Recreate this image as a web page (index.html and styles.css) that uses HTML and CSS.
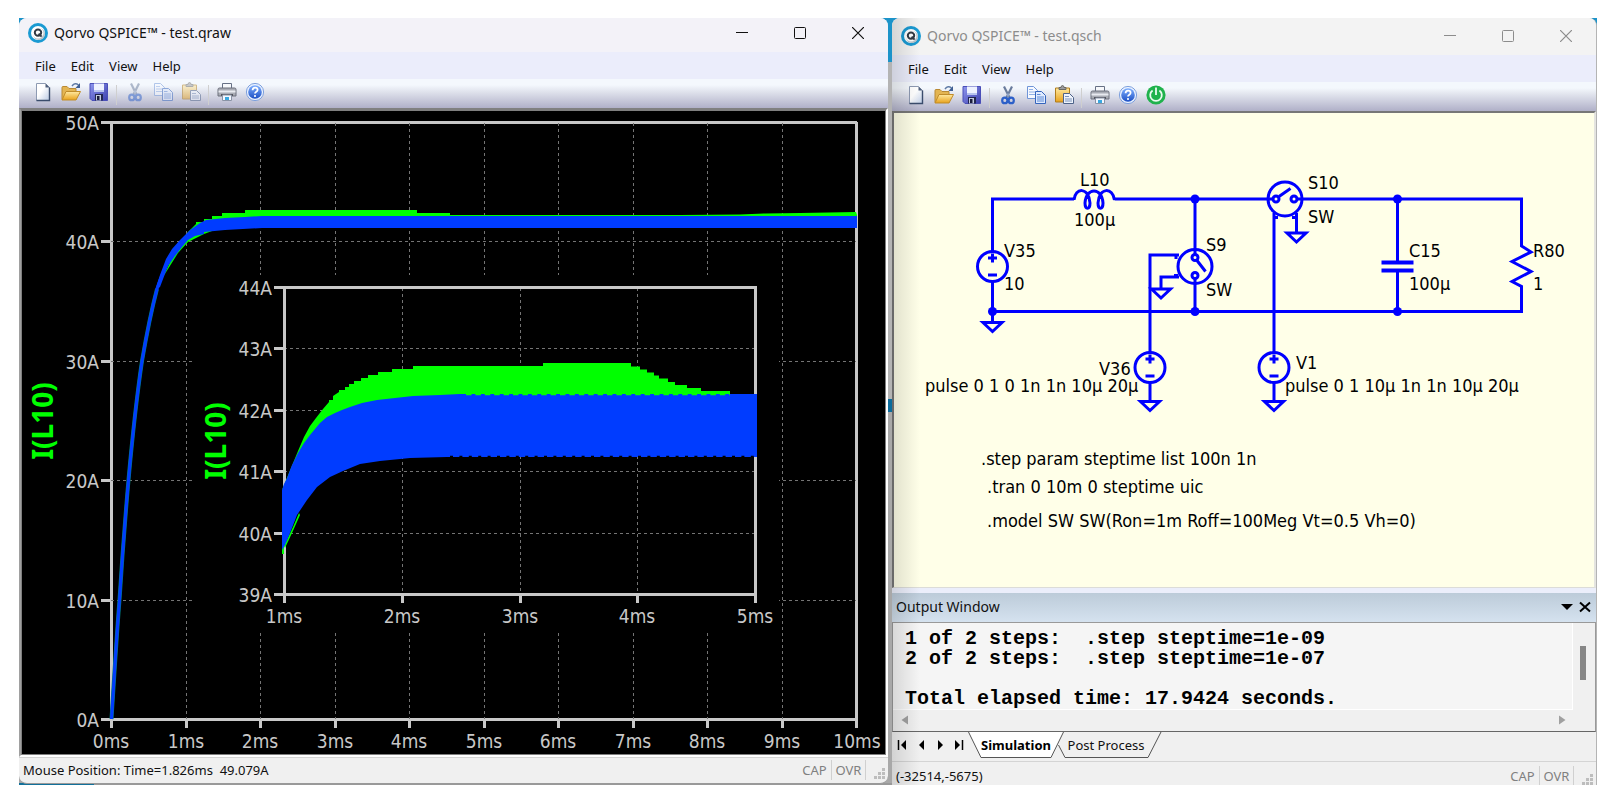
FILE: index.html
```html
<!DOCTYPE html>
<html lang="en">
<head>
<meta charset="utf-8">
<title>Qorvo QSPICE</title>
<link rel="stylesheet" href="styles.css">
</head>
<body>
<svg class="defs" aria-hidden="true">
  <defs>
    <linearGradient id="g-gold" x1="0" y1="0" x2="0" y2="1"><stop offset="0" stop-color="#ffe9a0"/><stop offset="1" stop-color="#e8a21c"/></linearGradient>
    <linearGradient id="g-blue" x1="0" y1="0" x2="0" y2="1"><stop offset="0" stop-color="#7fb0ff"/><stop offset="1" stop-color="#1c4fc4"/></linearGradient>
    <linearGradient id="g-page" x1="0" y1="0" x2="1" y2="1"><stop offset="0.4" stop-color="#ffffff"/><stop offset="1" stop-color="#b9c8e2"/></linearGradient>
    <linearGradient id="g-disk" x1="0" y1="0" x2="1" y2="1"><stop offset="0" stop-color="#8f97ee"/><stop offset="1" stop-color="#3b3fae"/></linearGradient>
    <symbol id="i-logo" viewBox="0 0 20 20">
      <circle cx="10" cy="10" r="10" fill="#1a9ad2"/>
      <circle cx="10" cy="10" r="7" fill="#fff"/>
      <circle cx="11" cy="11" r="6" fill="#b9c2c8"/>
      <circle cx="10" cy="10" r="5.500" fill="#fff"/>
      <circle cx="10" cy="9.600" r="3.200" fill="none" stroke="#333b45" stroke-width="2"/>
      <path d="M10.600 10.600l3 3" stroke="#333b45" stroke-width="2"/>
    </symbol>
    <symbol id="i-new" viewBox="0 0 20 20">
      <path d="M3.500 1.500h9l4 4v13h-13z" fill="url(#g-page)" stroke="#8d9ab2"/>
      <path d="M16.500 5.500v13h-13" fill="none" stroke="#3a4c6c" stroke-width="1.400"/>
      <path d="M12.500 1.500v4h4z" fill="#51617d"/>
    </symbol>
    <symbol id="i-open" viewBox="0 0 20 20">
      <path d="M1 17.500V5.500q0-1 1-1h4l2 2h7v11z" fill="#e3b552" stroke="#b98a35"/>
      <path d="M1 18L5 9.500h14.500L15 18z" fill="url(#g-gold)" stroke="#c08c2a"/>
      <path d="M11 4q3-4 6.500-1" fill="none" stroke="#5f7ba6" stroke-width="1.500"/>
      <path d="M19 1v5h-4.500z" fill="#3f5f93"/>
    </symbol>
    <symbol id="i-save" viewBox="0 0 20 20">
      <path d="M1 1.500h17.500v17H3l-2-2z" fill="url(#g-disk)" stroke="#4a4fb8"/>
      <path d="M5 1.500h10v8H5z" fill="#eef2ff"/>
      <path d="M5 8h10v2H5z" fill="#b8c4ee"/>
      <path d="M6 12h8v6.500H6z" fill="#22264f"/>
      <path d="M7 13h5v5.500H7z" fill="#c4ccdd"/>
      <path d="M8 14h2.500v4H8z" fill="#1b1d3c"/>
    </symbol>
    <symbol id="i-cut" viewBox="0 0 20 20">
      <path d="M6 1.500l5.500 11M14 1.500L8.500 12.500" stroke="#6a7c9c" stroke-width="2.200" fill="none"/>
      <path d="M10 8.500v3" stroke="#8fa4c8" stroke-width="2"/>
      <ellipse cx="6.800" cy="15.400" rx="2.600" ry="2.800" fill="none" stroke="#2c5fc8" stroke-width="2.200"/>
      <ellipse cx="13.200" cy="15.400" rx="2.600" ry="2.800" fill="none" stroke="#2c5fc8" stroke-width="2.200"/>
    </symbol>
    <symbol id="i-copy" viewBox="0 0 20 20">
      <path d="M1.500 1.500h6l4 4v8h-10z" fill="#f6f9ff" stroke="#6f95d8"/>
      <path d="M3 4.500h4M3 7h6M3 9.500h6" stroke="#8fb0e6"/>
      <path d="M9.500 6.500h6l4 4v8h-10z" fill="#e0ebff" stroke="#3565bd"/>
      <path d="M11 9.500h3.500M11 12h7M11 14h7M11 16h7" stroke="#5d8ad6"/>
    </symbol>
    <symbol id="i-paste" viewBox="0 0 20 20">
      <path d="M1.500 3h14v14h-14z" fill="url(#g-gold)" stroke="#b07d1d"/>
      <path d="M5 4.500V2.500h2q0-2 1.500-2T10 2.500h2v2z" fill="#9a9ba0" stroke="#6b6a62"/>
      <path d="M9.500 8.500h6l4 4v6h-10z" fill="#eef3fc" stroke="#4d6288"/>
      <path d="M11 11.500h4M11 14h7M11 16h7" stroke="#7d93ba"/>
    </symbol>
    <symbol id="i-print" viewBox="0 0 20 20">
      <path d="M5.500 7V1.500h9V7z" fill="#f6f8fb" stroke="#667085"/>
      <path d="M1 7.500q0-1.500 1.500-1.500h15q1.500 0 1.500 1.500V14H1z" fill="#a9acb5" stroke="#6c707c"/>
      <path d="M1.500 9.500h17" stroke="#e8eaf0" stroke-width="2"/>
      <path d="M4 12h12v2H4z" fill="#54575f"/>
      <path d="M5.500 13h9v5.500h-9z" fill="#f4f8ff" stroke="#8a93a5"/>
      <path d="M8 15h4v3H8z" fill="#39a8e0"/>
    </symbol>
    <symbol id="i-help" viewBox="0 0 20 20">
      <circle cx="10" cy="10" r="8.600" fill="#e9f1ff" stroke="#7ea0dc"/>
      <circle cx="10" cy="10" r="6.800" fill="url(#g-blue)"/>
      <path d="M7.600 8.200q0-2.600 2.500-2.600t2.500 2.200q0 1.200-1.300 2t-1.300 1.800" fill="none" stroke="#fff" stroke-width="1.800"/>
      <circle cx="10" cy="14" r="1.100" fill="#fff"/>
    </symbol>
    <symbol id="i-power" viewBox="0 0 20 20">
      <circle cx="10" cy="10" r="9.600" fill="#1fb24c"/>
      <path d="M6.600 5.400a5.800 5.800 0 1 0 6.800 0" fill="none" stroke="#e9fbef" stroke-width="1.800"/>
      <path d="M10 2.500v7.500" stroke="#e9fbef" stroke-width="1.800"/>
    </symbol>
    <symbol id="i-min" viewBox="0 0 12 12"><path d="M0 5.500h12" stroke="currentColor"/></symbol>
    <symbol id="i-max" viewBox="0 0 12 12"><rect x="0.500" y="0.500" width="11" height="11" rx="1" fill="none" stroke="currentColor"/></symbol>
    <symbol id="i-close" viewBox="0 0 12 12"><path d="M0 0l12 12M12 0L0 12" stroke="currentColor" stroke-width="1.200"/></symbol>
    <symbol id="i-grip" viewBox="0 0 12 12"><path d="M8 0h3v3H8zM4 4h3v3H4zM8 4h3v3H8zM0 8h3v3H0zM4 8h3v3H4zM8 8h3v3H8z" fill="#bdbdbd"/></symbol>
    <g id="gnd"><path d="M-9.500 0h19L0 9z"/></g>
    <g id="source"><circle r="15"/><path d="M-4.500-8.500h9M0-13v9M-4.500 8.500h9"/></g>
  </defs>
</svg>

<main class="desktop">
  <section class="window window-plot">
    <header class="titlebar">
      <svg class="logo"><use href="#i-logo"/></svg>
      <h1 class="title">Qorvo QSPICE™ - test.qraw</h1>
      <button class="caption" aria-label="Minimize"><svg><use href="#i-min"/></svg></button>
      <button class="caption" aria-label="Maximize"><svg><use href="#i-max"/></svg></button>
      <button class="caption" aria-label="Close"><svg><use href="#i-close"/></svg></button>
    </header>
    <nav class="menubar"><button>File</button><button>Edit</button><button>View</button><button>Help</button></nav>
    <div class="toolbar">
      <button aria-label="New"><svg><use href="#i-new"/></svg></button>
      <button aria-label="Open"><svg><use href="#i-open"/></svg></button>
      <button aria-label="Save"><svg><use href="#i-save"/></svg></button>
      <span class="separator"></span>
      <button aria-label="Cut" disabled><svg><use href="#i-cut"/></svg></button>
      <button aria-label="Copy" disabled><svg><use href="#i-copy"/></svg></button>
      <button aria-label="Paste" disabled><svg><use href="#i-paste"/></svg></button>
      <span class="separator"></span>
      <button aria-label="Print"><svg><use href="#i-print"/></svg></button>
      <button aria-label="Help"><svg><use href="#i-help"/></svg></button>
    </div>
    <div class="plot-frame">
      <svg class="plot" viewBox="21 110 865 645" role="img" aria-label="Inductor current I(L10) against time">
        <rect x="21" y="110" width="865" height="645" fill="#000"/>
        <rect class="focus" x="21.500" y="110.500" width="864" height="644"/>
        <path class="axis" d="M101 122.500H857M111.500 122.500V728M101 719.500H856M856.500 122V728M101 241.500h10M101 361.500h10M101 480.500h10M101 600.500h10M186.500 720v8M260.500 720v8M335.500 720v8M409.500 720v8M484.500 720v8M558.500 720v8M633.500 720v8M707.500 720v8M782.500 720v8"/>
        <path class="grid" d="M186.500 123V719M260.500 123V719M335.500 123V719M409.500 123V719M484.500 123V719M558.500 123V719M633.500 123V719M707.500 123V719M782.500 123V719M111 241.500H856M111 361.500H856M111 480.500H856M111 600.500H856"/>
        <path fill="#0f0" d="M176 250L188 232 196 224V222H204V219H212V216H222V213H245V210H417V213H450V215L680 215 740 214.500 765 213.500 800 213 856 212 857 215V228H220L204 234 188 242 178 253 168 269 163 277z"/>
        <path class="rise-edge" d="M111.500 719C114 680 117 630 119.500 600 122 560 125 520 128.500 480 133 430 138 388 142 361 147 332 152 308 157 289"/>
        <path class="rise" d="M111.500 719C114 680 117 630 119.500 600 122 560 125 520 128.500 480 133 430 138 388 142 361 147 332 152 308 157 289 162 273 168 261 174 251"/>
        <path fill="#003cff" d="M155 290L160 275 166 259 172 249 180 240 190 230 200 223 206 220 225 218 245 217 262 216H857V228H262L225 230 204 232V234L195 236 188 240 182 247 175 256 168 266 160 287z"/>
        <g class="labels labels-y">
          <text x="99" y="130">50A</text><text x="99" y="249">40A</text><text x="99" y="369">30A</text><text x="99" y="488">20A</text><text x="99" y="608">10A</text><text x="99" y="727">0A</text>
        </g>
        <g class="labels labels-x">
          <text x="111" y="748">0ms</text><text x="186" y="748">1ms</text><text x="260" y="748">2ms</text><text x="335" y="748">3ms</text><text x="409" y="748">4ms</text><text x="484" y="748">5ms</text><text x="558" y="748">6ms</text><text x="633" y="748">7ms</text><text x="707" y="748">8ms</text><text x="782" y="748">9ms</text><text x="857" y="748">10ms</text>
        </g>
        <text class="trace" transform="translate(53 421) rotate(-90)">I(L10)</text>

        <rect x="193" y="275" width="586" height="358" fill="#000"/>
        <path class="grid" d="M183 361.500h10M183 480.500h10M183 600.500h10M402.500 288V594M520.500 288V594M637.500 288V594M284 348.500H755M284 410.500H755M284 471.500H755M284 533.500H755"/>
        <path class="axis" d="M274 287.500H757M284.500 287.500V603M274 594.500H755M755.500 287V603M274 348.500h10M274 410.500h10M274 471.500h10M274 533.500h10M402.500 595v8M520.500 595v8M637.500 595v8"/>
        <path fill="#0f0" d="M282 490L298 451 304 437 310 426 316 418 323 409 329 402V400H333V396L339 392V390H345V387H349V384H354V381H361V378H368V375H378V372H392V369H413V366H543V363H631V366.500H640V369.500H647V372.500H654V375.500H659V378.500H668V382H675V385H687V388H701V391H730V394H756V397L400 420 310 460z"/>
        <path fill="#0f0" d="M282 545h2V554h-2zM284 546L293 527 299 513 300 515 292 533 285 548z"/>
        <path fill="#003cff" d="M282 490L284 484 287 478 292 465 298 453 304 443 310 435 320 423 327 417 335 413 342 410 350 407 362 403 377 400 395 398 413 396 440 395 460 394H757V457H447L410 458 380 461 360 464 343 471 330 477 317 487 307 500 297 515 290 533 285 545 282 550z"/>
        <path d="M466 394.500H730" fill="none" stroke="#0f0" stroke-width="1.500" stroke-dasharray="5.500 3.900"/>
        <path d="M450 456.500H756" fill="none" stroke="#000" stroke-width="1.500" stroke-dasharray="3 6.400"/>
        <g class="labels labels-y">
          <text x="272" y="295">44A</text><text x="272" y="356">43A</text><text x="272" y="418">42A</text><text x="272" y="479">41A</text><text x="272" y="541">40A</text><text x="272" y="602">39A</text>
        </g>
        <g class="labels labels-x">
          <text x="284" y="623">1ms</text><text x="402" y="623">2ms</text><text x="520" y="623">3ms</text><text x="637" y="623">4ms</text><text x="755" y="623">5ms</text>
        </g>
        <text class="trace" transform="translate(226 441) rotate(-90)">I(L10)</text>
      </svg>
    </div>
    <footer class="statusbar">
      <span class="status-text">Mouse Position: Time=1.826ms&nbsp; 49.079A</span>
      <span class="status-key">CAP</span><span class="status-key">OVR</span>
      <svg class="grip"><use href="#i-grip"/></svg>
    </footer>
  </section>

  <section class="window window-schematic">
    <header class="titlebar">
      <svg class="logo"><use href="#i-logo"/></svg>
      <h1 class="title">Qorvo QSPICE™ - test.qsch</h1>
      <button class="caption" aria-label="Minimize"><svg><use href="#i-min"/></svg></button>
      <button class="caption" aria-label="Maximize"><svg><use href="#i-max"/></svg></button>
      <button class="caption" aria-label="Close"><svg><use href="#i-close"/></svg></button>
    </header>
    <nav class="menubar"><button>File</button><button>Edit</button><button>View</button><button>Help</button></nav>
    <div class="toolbar">
      <button aria-label="New"><svg><use href="#i-new"/></svg></button>
      <button aria-label="Open"><svg><use href="#i-open"/></svg></button>
      <button aria-label="Save"><svg><use href="#i-save"/></svg></button>
      <span class="separator"></span>
      <button aria-label="Cut"><svg><use href="#i-cut"/></svg></button>
      <button aria-label="Copy"><svg><use href="#i-copy"/></svg></button>
      <button aria-label="Paste"><svg><use href="#i-paste"/></svg></button>
      <span class="separator"></span>
      <button aria-label="Print"><svg><use href="#i-print"/></svg></button>
      <button aria-label="Help"><svg><use href="#i-help"/></svg></button>
      <button aria-label="Run"><svg><use href="#i-power"/></svg></button>
    </div>
    <div class="sheet-frame">
      <svg class="sheet" viewBox="894 113 700 474" role="img" aria-label="Boost converter schematic">
        <g class="wires">
          <path d="M992.500 251V199H1074M1114.500 199H1273M1297 199H1521.500V246L1531 252 1512 261.500 1531 271.500 1512 281.500 1521.500 286.500V311.500H992.500M992.500 282V322M1195 199V255M1195 279V311.500M1397.500 199V262M1397.500 271V311.500"/>
          <path d="M1074 200C1075 187 1089 187 1090 203C1090 210 1085 210 1085 203C1086 187 1102 187 1103 203C1103 210 1098 210 1098 203C1099 187 1113 187 1114.500 200"/>
          <path d="M1179 255H1150V352M1150 383V401M1179 277H1161V289M1274 213V352M1274 383V401M1296.500 213V233"/>
          <path d="M1381.500 262.500h32M1381.500 270.500h32" stroke-width="4"/>
          <circle cx="1195" cy="266.500" r="17"/><circle cx="1195" cy="257.500" r="3"/><circle cx="1195" cy="275.500" r="3"/>
          <path d="M1197 260.500L1205.500 271.500M1176 255v4M1174 275.500h4"/>
          <circle cx="1285" cy="199" r="17"/><circle cx="1276" cy="199" r="3"/><circle cx="1294" cy="199" r="3"/>
          <path d="M1279 196.500L1290.500 188.500M1274 217.500h4M1292 217.500h4"/>
          <use href="#source" x="992.500" y="266.500"/><use href="#source" x="1150" y="367.500"/><use href="#source" x="1274" y="367.500"/>
          <use href="#gnd" x="992.500" y="322.500"/><use href="#gnd" x="1161" y="289"/><use href="#gnd" x="1296.500" y="233"/><use href="#gnd" x="1150" y="401.500"/><use href="#gnd" x="1274" y="401.500"/>
        </g>
        <g fill="#00f"><circle cx="992.500" cy="311.500" r="4.500"/><circle cx="1195" cy="199" r="4.500"/><circle cx="1195" cy="311.500" r="4.500"/><circle cx="1397.500" cy="199" r="4.500"/><circle cx="1397.500" cy="311.500" r="4.500"/></g>
        <g class="notes">
          <text x="1080" y="186">L10</text><text x="1074" y="226">100µ</text>
          <text x="1004" y="257">V35</text><text x="1004" y="290">10</text>
          <text x="1206" y="251">S9</text><text x="1206" y="296">SW</text>
          <text x="1308" y="189">S10</text><text x="1308" y="223">SW</text>
          <text x="1409" y="257">C15</text><text x="1409" y="290">100µ</text>
          <text x="1533" y="257">R80</text><text x="1533" y="290">1</text>
          <text x="1099" y="375">V36</text><text x="1296" y="369">V1</text>
          <text x="925" y="392">pulse 0 1 0 1n 1n 10µ 20µ</text>
          <text x="1285" y="392">pulse 0 1 10µ 1n 1n 10µ 20µ</text>
          <text x="981" y="465">.step param steptime list 100n 1n</text>
          <text x="987" y="493">.tran 0 10m 0 steptime uic</text>
          <text x="987" y="527">.model SW SW(Ron=1m Roff=100Meg Vt=0.5 Vh=0)</text>
        </g>
      </svg>
    </div>
    <section class="output">
      <header class="output-head">
        <h2>Output Window</h2>
        <button aria-label="Window position"><svg viewBox="0 0 12 12"><path d="M0 3h12L6 9z" fill="#000"/></svg></button>
        <button aria-label="Close panel"><svg viewBox="0 0 12 12"><path d="M1 1.500l10 9M11 1.500l-10 9" stroke="#000" stroke-width="2"/></svg></button>
      </header>
      <div class="output-body">
        <pre class="log">1 of 2 steps:  .step steptime=1e-09
2 of 2 steps:  .step steptime=1e-07

Total elapsed time: 17.9424 seconds.</pre>
        <div class="scroll-y"><span class="thumb"></span></div>
        <div class="scroll-x">
          <svg viewBox="0 0 8 10"><path d="M7 0.500v9L0.500 5z"/></svg>
          <svg viewBox="0 0 8 10"><path d="M1 0.500v9L7.500 5z"/></svg>
        </div>
      </div>
      <div class="tabs">
        <button class="step" aria-label="First"><svg viewBox="0 0 10 10"><path d="M1.500 0v10" stroke="#000" stroke-width="1.500"/><path d="M9 0v10L4 5z"/></svg></button>
        <button class="step" aria-label="Previous"><svg viewBox="0 0 10 10"><path d="M8 0v10L3 5z"/></svg></button>
        <button class="step" aria-label="Next"><svg viewBox="0 0 10 10"><path d="M3 0v10l5-5z"/></svg></button>
        <button class="step" aria-label="Last"><svg viewBox="0 0 10 10"><path d="M8.500 0v10" stroke="#000" stroke-width="1.500"/><path d="M1 0v10l5-5z"/></svg></button>
        <button class="tab tab-active"><svg viewBox="0 0 96 26" preserveAspectRatio="none"><path d="M0.500 0L13 25.500H83L95.500 0z" fill="#fff"/><path d="M0.500 0L13 25.500H83L95.500 0" fill="none" stroke="#555"/></svg><span>Simulation</span></button>
        <button class="tab"><svg viewBox="0 0 104 26" preserveAspectRatio="none"><path d="M0.500 13L7 25.500H90L103 0" fill="none" stroke="#555"/></svg><span>Post Process</span></button>
      </div>
    </section>
    <footer class="statusbar">
      <span class="status-text">(-32514,-5675)</span>
      <span class="status-key">CAP</span><span class="status-key">OVR</span>
      <svg class="grip"><use href="#i-grip"/></svg>
    </footer>
  </section>
</main>
</body>
</html>
```
FILE: styles.css
```css
* { box-sizing: border-box; }

body {
  margin: 0;
  padding: 18px 26px 20px 19px;
  background: #fff;
  color: #111;
  font: 13px/20px "Noto Sans", "Open Sans", sans-serif;
}

button {
  margin: 0;
  padding: 0;
  border: 0;
  background: none;
  color: inherit;
  font: inherit;
}

svg { display: block; }

.defs { position: absolute; width: 0; height: 0; }

.desktop {
  display: grid;
  grid-template-columns: 869fr 705fr;
  gap: 4px;
  background:
    linear-gradient(90deg, #12709a 75px, #999 75px) 0 100% / 100% 2px no-repeat,
    linear-gradient(#1c93c9 44px, #b4b4b4 44px 381px, #0a6c9c 381px 394px, #a8a8a8 394px);
}

.window {
  display: flex;
  flex-direction: column;
  min-width: 0;
  background: #f0f0f0;
  overflow: hidden;
}

.window-plot {
  margin-bottom: 1px;
  border-bottom: 1px solid #999;
  border-radius: 8px;
}

.window-schematic {
  position: relative;
  border-right: 1px solid #b4b4b4;
  border-radius: 8px 8px 0 0;
}

.window-schematic::before {
  content: "";
  position: absolute;
  inset: 0 auto 0 0;
  width: 28px;
  background: linear-gradient(90deg, rgba(0, 0, 0, 0.12), rgba(0, 0, 0, 0));
  pointer-events: none;
}

.titlebar {
  display: flex;
  align-items: center;
  height: 34px;
  padding: 0 1px 4px 9px;
  background: #f3f2f8;
}

.window-schematic .titlebar {
  height: 37px;
  padding-bottom: 1px;
  background: #f3f3f3;
  color: #8c8c8c;
}

.logo { width: 20px; height: 20px; margin-right: 6px; }

.title {
  flex: 1;
  margin: 0;
  font-size: 14px;
  font-weight: 400;
}

.caption {
  display: grid;
  place-items: center;
  width: 58px;
  height: 28px;
}

.caption svg { width: 12px; height: 12px; }

.menubar {
  display: flex;
  gap: 15px;
  height: 27px;
  padding-left: 16px;
  background: #ebedfb;
}

.toolbar {
  display: flex;
  height: 29px;
  padding: 3px 0 0 10px;
  background: linear-gradient(#f4f8fd 6px, #e2e5ee 12px, #b0b0c8);
}

.toolbar button { width: 28px; height: 20px; padding: 0 4px; }
.toolbar svg { width: 20px; height: 20px; }
.toolbar button:disabled { opacity: 0.5; }

.separator {
  width: 8px;
  height: 20px;
  margin-top: 3px;
  background: linear-gradient(#cfcfcf, #cfcfcf) 3px 0 / 1px 100% no-repeat;
}

.plot-frame {
  border: 2px solid #808080;
  border-right-color: #fff;
  border-bottom-color: #fff;
  border-left-color: #a0a0a0;
}

.plot, .sheet { width: 100%; height: auto; }

.focus { fill: none; stroke: #fff; stroke-dasharray: 1 1; }
.axis { fill: none; stroke: #c8c8c8; stroke-width: 3; }
.grid { fill: none; stroke: #747474; stroke-dasharray: 3 3; }
.rise { fill: none; stroke: #003cff; stroke-width: 3; }
.rise-edge { fill: none; stroke: #007878; stroke-width: 4; }

.labels {
  fill: #c8c8c8;
  font: 19px "DejaVu Sans Condensed", "Noto Sans", sans-serif;
}

.labels-y { text-anchor: end; }
.labels-x { text-anchor: middle; }

.trace {
  fill: #0f0;
  font: 700 28px "Noto Sans", sans-serif;
  text-anchor: middle;
}

.sheet-frame {
  border: solid #777;
  border-width: 2px 2px 1px;
  border-right-color: #e4e4e0;
  border-bottom-color: #dcdcd8;
}

.sheet { background: #ffffe8; }
.wires { fill: none; stroke: #00f; stroke-width: 3; }

.notes {
  fill: #000;
  font: 18px "DejaVu Sans Condensed", "Noto Sans", sans-serif;
}

.output {
  display: flex;
  flex: 1;
  flex-direction: column;
  border-top: 5px solid #ebeefb;
}

.output-head {
  display: flex;
  align-items: center;
  height: 30px;
  padding: 0 2px 1px 4px;
  border-bottom: 1px solid #999;
  background: linear-gradient(#bccbd9, #d5e2ef);
}

.output-head h2 { flex: 1; margin: 0; font-size: 14px; font-weight: 400; }
.output-head button { width: 18px; height: 20px; padding: 4px 3px; }
.output-head svg { width: 12px; height: 12px; }

.output-body {
  display: grid;
  flex: 1;
  grid-template: 1fr 21px / 1fr 22px;
  border-bottom: 1px solid #666;
  border-left: 1px solid #999;
  border-right: 1px solid #999;
}

.log {
  margin: 0;
  padding: 6px 0 0 12px;
  border: solid #fff;
  border-width: 0 1px 1px 0;
  background: #f5f5f5;
  color: #000;
  font: 700 20px/20px "Liberation Mono", monospace;
  overflow: hidden;
}

.scroll-y { padding: 23px 7px 0; }
.thumb { display: block; width: 6px; height: 34px; background: #868686; }

.scroll-x {
  display: flex;
  justify-content: space-between;
  padding: 5px 7px 0 8px;
  fill: #a0a0a0;
}

.scroll-x svg { width: 8px; height: 10px; }

.tabs {
  display: flex;
  height: 30px;
  border-bottom: 1px solid #d4d4d4;
}

.step {
  display: grid;
  place-items: center;
  width: 19px;
  height: 26px;
}

.step svg { width: 10px; height: 10px; }

.tab {
  position: relative;
  width: 104px;
  height: 26px;
  margin-left: -6px;
  padding-right: 8px;
}

.tab svg { position: absolute; inset: 0; width: 100%; height: 100%; }
.tab span { position: relative; }

.tab-active {
  z-index: 1;
  width: 96px;
  margin-left: 0;
  padding: 0;
  color: #000;
  font-weight: 700;
}

.statusbar {
  display: flex;
  align-items: center;
  height: 25px;
  padding: 0 2px 0 4px;
  border-top: 1px solid #d4d4d4;
}

.window-schematic .statusbar {
  height: 23px;
  padding-top: 4px;
  border-top: 0;
}

.status-text { flex: 1; }

.status-key {
  width: 34px;
  border-right: 1px solid #d0d0d0;
  color: #808080;
  text-align: center;
}

.grip { width: 12px; height: 12px; margin: 8px 0 0 8px; }
```
